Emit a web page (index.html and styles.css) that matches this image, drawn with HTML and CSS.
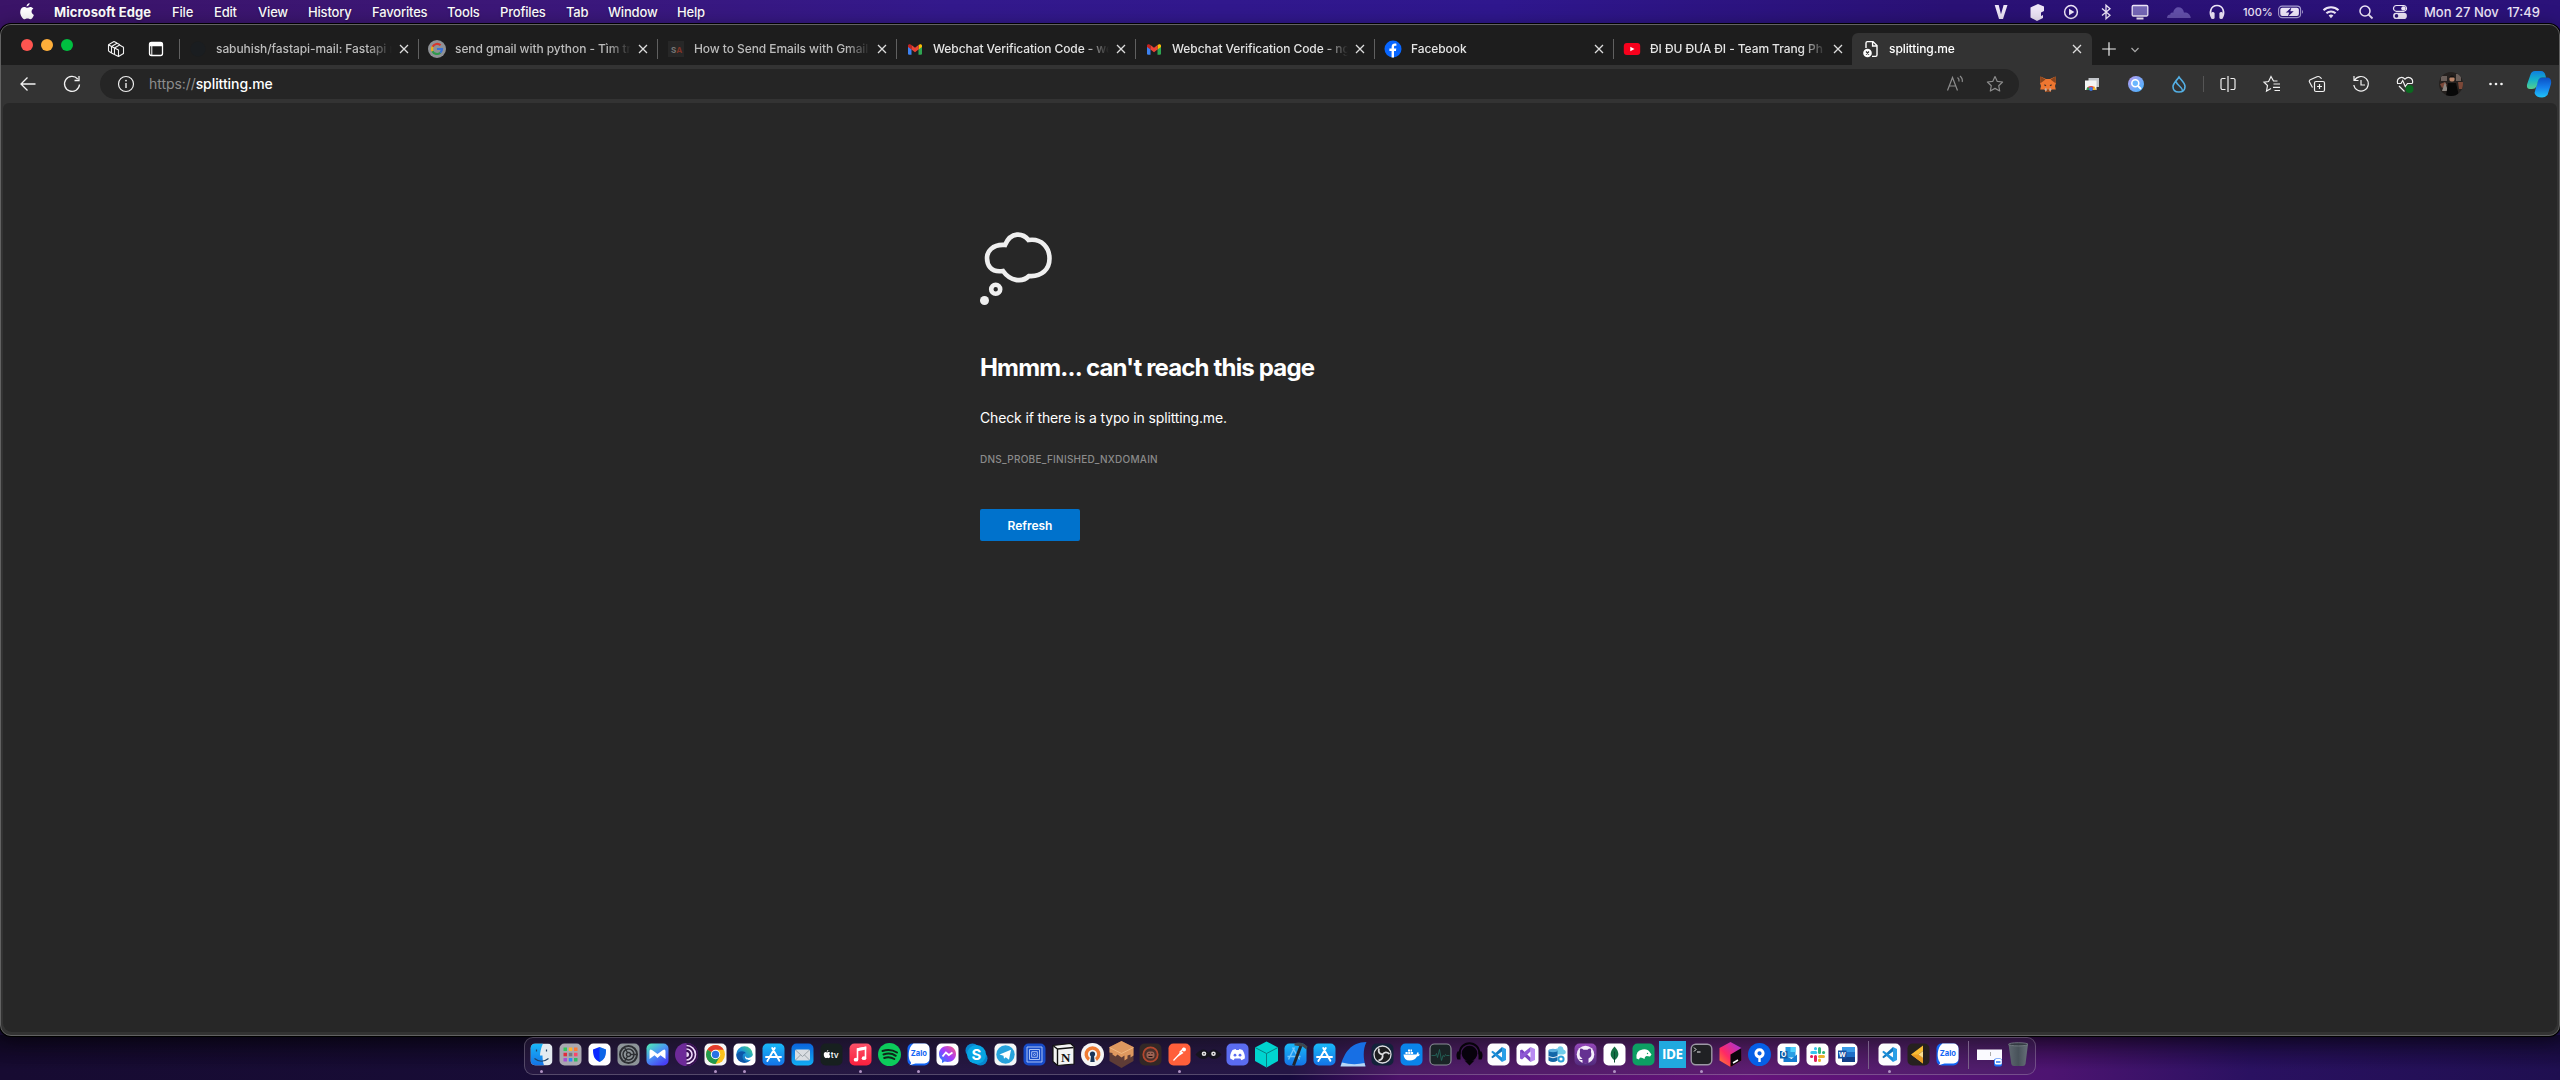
FILE: index.html
```html
<!DOCTYPE html>
<html lang="en">
<head>
<meta charset="utf-8">
<title>splitting.me</title>
<link rel="stylesheet" href="styles.css">
</head>
<body>
<svg class="defs" width="0" height="0" aria-hidden="true">
  <defs>
    <linearGradient id="g-sky" x1="0" y1="0" x2="0" y2="1"><stop offset="0" stop-color="#19b8f8"/><stop offset="1" stop-color="#1473e6"/></linearGradient>
    <linearGradient id="g-deep" x1="0" y1="0" x2="0" y2="1"><stop offset="0" stop-color="#0a63dc"/><stop offset="1" stop-color="#12aef4"/></linearGradient>
    <linearGradient id="g-edge" x1="0" y1="1" x2="1" y2="0"><stop offset="0" stop-color="#0c4fa0"/><stop offset=".5" stop-color="#1b93d8"/><stop offset="1" stop-color="#46d47c"/></linearGradient>
    <linearGradient id="g-red" x1="0" y1="0" x2="0" y2="1"><stop offset="0" stop-color="#fb5268"/><stop offset="1" stop-color="#fa1f3d"/></linearGradient>
    <linearGradient id="g-purple" x1="0" y1="0" x2="0" y2="1"><stop offset="0" stop-color="#9447b8"/><stop offset="1" stop-color="#512b7c"/></linearGradient>
    <linearGradient id="g-teal" x1="0" y1="0" x2=".7" y2="1"><stop offset="0" stop-color="#4ff0b0"/><stop offset=".5" stop-color="#4a96f2"/><stop offset="1" stop-color="#473ff5"/></linearGradient>
    <linearGradient id="g-msg" x1="0" y1="1" x2="1" y2="0"><stop offset="0" stop-color="#0a8cff"/><stop offset=".5" stop-color="#a13aff"/><stop offset="1" stop-color="#ff5c7a"/></linearGradient>
    <linearGradient id="g-jet" x1="0" y1="1" x2="1" y2="0"><stop offset="0" stop-color="#ff8a28"/><stop offset=".4" stop-color="#ff2965"/><stop offset="1" stop-color="#9a35e8"/></linearGradient>
    <linearGradient id="g-cop1" x1="0" y1="0" x2="0" y2="1"><stop offset="0" stop-color="#0e7fe0"/><stop offset=".5" stop-color="#16b3c8"/><stop offset="1" stop-color="#56d08c"/></linearGradient>
    <linearGradient id="g-cop2" x1="0" y1="0" x2="0" y2="1"><stop offset="0" stop-color="#0b4fc4"/><stop offset=".5" stop-color="#1580ec"/><stop offset="1" stop-color="#20c4f8"/></linearGradient>
    <linearGradient id="g-lens" x1="0" y1="0" x2="1" y2="1"><stop offset="0" stop-color="#b99bf0"/><stop offset="1" stop-color="#3fb4ff"/></linearGradient>
    <linearGradient id="g-trash" x1="0" y1="0" x2="1" y2="0"><stop offset="0" stop-color="#5e6870"/><stop offset=".5" stop-color="#48525a"/><stop offset="1" stop-color="#68727a"/></linearGradient>
    <clipPath id="c-tile"><rect x="-11" y="-11" width="22" height="22" rx="5"/></clipPath>
    <clipPath id="c-face"><circle r="12"/></clipPath>
    <symbol id="close" viewBox="0 0 10 10"><path d="M1 1l8 8M9 1L1 9" fill="none" stroke="currentColor" stroke-width="1.3"/></symbol>
    <symbol id="apple" viewBox="0 0 14 17"><path d="M9.6 0c.1 1.800-1.300 3.400-3 3.400C6.400 1.800 8 .2 9.600 0zM7.200 4.800c.7 0 1.700-.9 3.100-.9 1.100 0 2.300.6 3.100 1.700-2.700 1.600-2.300 5.200.5 6.300-.7 1.900-2.100 4.400-3.600 4.400-1.100 0-1.500-.7-2.800-.7s-1.800.7-2.800.7C2.900 16.300.2 12.600.2 9.200c0-3.300 2-5.200 4.100-5.200 1.300 0 2.200.8 2.900.8z" fill="#fff"/></symbol>
    <symbol id="gmail" viewBox="0 0 16 12"><path d="M0 2v8.500C0 11.300.7 12 1.500 12H4V5z" fill="#3d82f0"/><path d="M16 2v8.500c0 .8-.7 1.500-1.500 1.500H12V5z" fill="#2fa551"/><path d="M12 0.800V6l4-3V1.600C16 .2 14.400-.5 13.200.3z" fill="#fbbc05"/><path d="M4 .9V6L0 3V1.600C0 .2 1.600-.5 2.800.3z" fill="#c5221f"/><path d="M4 .9l4 3 4-3V6L8 9 4 6z" fill="#ea4335"/></symbol>
    <symbol id="google" viewBox="0 0 18 18"><circle cx="9" cy="9" r="9" fill="#8f9296"/><g fill="none" stroke-width="2.200"><path d="M12.600 5.300A5 5 0 0 0 4.600 6.800" stroke="#d6382d"/><path d="M4.500 6.800a5 5 0 0 0 0 4.400" stroke="#e9b21a"/><path d="M4.500 11.200a5 5 0 0 0 7.800 1.500" stroke="#2f9a4c"/><path d="M9 9h5a5 5 0 0 1-1.700 3.700" stroke="#3a72d8"/></g></symbol>
    <symbol id="vscode" viewBox="-8 -8 16 16"><path d="M-7.300 2.400L3.500-7.500V-3L-5.900 3.700z" fill="#1278be"/><path d="M-7.300-2.400L3.500 7.500V3L-5.900-3.700z" fill="#1b90dc"/><path d="M3.500-7.600L7.500-5.600V5.600L3.500 7.600z" fill="#2a9fe6"/></symbol>
    <symbol id="vs-tile" viewBox="-14.500 -14.500 29 29"><rect x="-11" y="-11" width="22" height="22" rx="5" fill="#fcfcfd"/><use href="#vscode" x="-8" y="-8" width="16" height="16"/></symbol>
    <symbol id="zalo" viewBox="-14.500 -14.500 29 29"><rect x="-11" y="-11" width="22" height="22" rx="5" fill="#1264f4"/><path d="M-5-11H6a5 5 0 0 1 5 5V4a5 5 0 0 1-5 5h-9l-6 1.800c1.300-1 2-2 1.200-3.200C-10.800 4-10.800-7-5-11z" fill="#fff"/><text x=".3" y="1.500" font-size="7.600" font-weight="700" fill="#1264f4" text-anchor="middle">Zalo</text></symbol>
    <symbol id="store" viewBox="-14.500 -14.500 29 29"><rect x="-11" y="-11" width="22" height="22" rx="5" fill="url(#g-sky)"/><path d="M1.300-6.500L-4.700 4M-1.300-6.500L4.900 4.500l1 1.700M-7.500 2.500H2.500M5 2.500h2.500M-5.500 5.200l-.7 1.200" fill="none" stroke="#fff" stroke-width="1.900" stroke-linecap="round"/></symbol>
  </defs>
</svg>

<header class="menubar">
  <svg class="apple" viewBox="0 0 14 17"><use href="#apple"/></svg>
  <nav class="menus">
    <span class="app">Microsoft Edge</span><span>File</span><span>Edit</span><span>View</span><span>History</span><span>Favorites</span><span>Tools</span><span>Profiles</span><span>Tab</span><span>Window</span><span>Help</span>
  </nav>
  <div class="status">
    <svg viewBox="-12 -12 24 24"><path d="M-6.300-7h4L0 2.200 2.600-7h3.900L2 7h-4z" fill="#eee6f8"/></svg>
    <svg viewBox="-12 -12 24 24"><path d="M-6.500-4.500L1-8l6 2.500V-1L4 .5V4L6 3v3L0 9-6.500 5.500z" fill="#eee6f8"/></svg>
    <svg viewBox="-12 -12 24 24"><circle r="6.400" fill="none" stroke="#eee6f8" stroke-width="1.500"/><path d="M-2-3.200L3.400 0-2 3.200z" fill="#eee6f8"/></svg>
    <svg viewBox="-12 -12 24 24"><path d="M-4-3.500L4 3.300 0 6.800V-6.800L4-3.300-4 3.500" fill="none" stroke="#eee6f8" stroke-width="1.300"/></svg>
    <svg viewBox="-12 -12 24 24"><rect x="-7.800" y="-6.500" width="15.600" height="10.500" rx="1.200" fill="#7566b6" stroke="#eee6f8" stroke-width="1.300"/><path d="M-3.500 6.500h7" stroke="#eee6f8" stroke-width="2"/></svg>
    <svg viewBox="-12 -12 24 24"><path d="M-12 6c0-2.500 1.500-3.600 3.300-3.600 0-1.700 2-2.400 2.900-1.500C-5-6.800 4-6.500 5 .5c3-.5 6.500 1.500 6.800 5.500z" fill="#6350aa"/></svg>
    <svg viewBox="-12 -12 24 24"><path d="M-5.200 5.500C-8 1-6.500-6.500 0-6.500S8 1 5.200 5.500" fill="none" stroke="#eee6f8" stroke-width="1.600"/><rect x="-6" y="0" width="3.600" height="7" rx="1.600" fill="#eee6f8"/><rect x="2.400" y="0" width="3.600" height="7" rx="1.600" fill="#eee6f8"/></svg>
    <span class="pct">100%</span>
    <svg class="battery" viewBox="0 0 26 14"><rect x=".6" y="1.100" width="22" height="11.500" rx="3.500" fill="none" stroke="#a79cd0" stroke-width="1.100"/><rect x="2.300" y="2.800" width="18.600" height="8.100" rx="2" fill="#eee6f8"/><path d="M24 5c1.300.5 1.300 3.300 0 3.800z" fill="#a79cd0"/><path d="M13.500 2.200L7.800 7.600h3.400L9.800 11.800l5.900-5.500h-3.400z" fill="#2b1278"/></svg>
    <svg viewBox="-12 -12 24 24"><g fill="none" stroke="#eee6f8" stroke-width="2.100"><path d="M-7.500-1.700a10.800 10.800 0 0 1 15 0M-4.600 1.300a6.600 6.600 0 0 1 9.200 0"/></g><path d="M0 6.200L-2.400 3.600a3.500 3.500 0 0 1 4.800 0z" fill="#eee6f8"/></svg>
    <svg viewBox="-12 -12 24 24"><circle cx="-1" cy="-1" r="5" fill="none" stroke="#eee6f8" stroke-width="1.500"/><path d="M2.600 2.600L6.500 6.500" stroke="#eee6f8" stroke-width="1.800"/></svg>
    <svg viewBox="-12 -12 24 24"><rect x="-6.500" y="-6.500" width="13" height="5.800" rx="2.900" fill="none" stroke="#eee6f8" stroke-width="1.200"/><circle cx="3.400" cy="-3.600" r="2.200" fill="#eee6f8"/><rect x="-6.900" y=".8" width="13.800" height="6.200" rx="3.100" fill="#eee6f8"/><circle cx="-3.500" cy="3.900" r="1.800" fill="#2b1278"/></svg>
    <span class="clock"><span>Mon 27 Nov</span><span>17:49</span></span>
  </div>
</header>

<main class="window">
  <div class="tabstrip">
    <div class="lights"><i class="red"></i><i class="amber"></i><i class="green"></i></div>
    <div class="strip-tools">
      <svg viewBox="-10 -10 20 20"><g fill="none" stroke="#f0f0f0" stroke-width="1.100" stroke-linejoin="round"><path d="M-1.500-1L3.500-4 7.500-1.800V4.500L2.500 7.500-1.500 5.500zM-1.500-1L2.500 1V7.500"/><path d="M-4.500 4V-2.500L1-5.800 4-4.300M-7.500 2V-4.300L-2-7.500 1-6M-4.500-2.500L-1.500-1M-7.500-4.300L-4.500-2.500M-4.500 4l3 1.500M-7.500 2l3 2"/></g></svg>
      <svg viewBox="-10 -10 20 20"><rect x="-6.500" y="-6.500" width="13" height="13" rx="2" fill="none" stroke="#fff" stroke-width="1.300"/><path d="M-6.500-6.300h13v3.500h-13z" fill="#fff"/><path d="M-4.200-3V6" stroke="#fff" stroke-width="1"/></svg>
    </div>
    <div class="tabs">
      <div class="tab dim"><svg class="fav" viewBox="0 0 18 18"><circle cx="9" cy="9" r="7.500" fill="#1a1d20"/></svg><span class="title">sabuhish/fastapi-mail: Fastapi m</span><svg class="x"><use href="#close"/></svg></div>
      <div class="tab dim"><svg class="fav"><use href="#google"/></svg><span class="title">send gmail with python - Tìm tr</span><svg class="x"><use href="#close"/></svg></div>
      <div class="tab dim"><svg class="fav" viewBox="0 0 18 18"><rect x="1" y="1" width="16" height="16" fill="#272727"/><text x="4" y="12.500" font-size="8" font-weight="700" fill="#777">S<tspan fill="#803426">A</tspan></text></svg><span class="title">How to Send Emails with Gmail</span><svg class="x"><use href="#close"/></svg></div>
      <div class="tab"><svg class="fav mail"><use href="#gmail"/></svg><span class="title">Webchat Verification Code - we</span><svg class="x"><use href="#close"/></svg></div>
      <div class="tab"><svg class="fav mail"><use href="#gmail"/></svg><span class="title">Webchat Verification Code - ng</span><svg class="x"><use href="#close"/></svg></div>
      <div class="tab"><svg class="fav" viewBox="0 0 18 18"><circle cx="9" cy="9" r="8.500" fill="#0866ff"/><path d="M7.600 17.500V11H5.400V8.600h2.200V7.200c0-2.600 1.300-3.700 3.300-3.700.7 0 1.200.1 1.500.2v2.100h-1.100c-1 0-1.300.5-1.300 1.400v1.400h2.300L11.900 11H10v6.500z" fill="#fff"/></svg><span class="title">Facebook</span><svg class="x"><use href="#close"/></svg></div>
      <div class="tab"><svg class="fav" viewBox="0 0 18 18"><rect x=".8" y="3" width="16.400" height="12" rx="3" fill="#f8001c"/><path d="M7.300 6.700L11.500 9l-4.200 2.300z" fill="#fff"/></svg><span class="title">ĐI ĐU ĐƯA ĐI - Team Trang Ph</span><svg class="x"><use href="#close"/></svg></div>
      <div class="tab active"><svg class="fav" viewBox="0 0 18 18"><path d="M4 8V3c0-.8.600-1.400 1.400-1.400H11l4 4V15c0 .8-.6 1.400-1.400 1.400H10M10.600 1.600V6H15" fill="none" stroke="#fff" stroke-width="1.400"/><circle cx="5.500" cy="13" r="4.300" fill="#fff"/><path d="M4 11.500l3 3m0-3l-3 3" stroke="#333" stroke-width="1.200"/></svg><span class="title">splitting.me</span><svg class="x"><use href="#close"/></svg></div>
    </div>
    <svg class="plus" viewBox="0 0 14 14"><path d="M7 .2v13.600M.2 7h13.600" stroke="#f0f0f0" stroke-width="1.200"/></svg>
    <svg class="chev" viewBox="0 0 8 6"><path d="M.5 1L4 4.700 7.500 1" fill="none" stroke="#aaa" stroke-width="1.200"/></svg>
  </div>

  <div class="toolbar">
    <svg class="nav" viewBox="-10 -10 20 20"><path d="M7.500 0H-7M-.5-6.500L-7 0-.5 6.500" fill="none" stroke="#f2f2f2" stroke-width="1.300"/></svg>
    <svg class="nav reload" viewBox="-10 -10 20 20"><path d="M7.500.5A7.500 7.500 0 1 1 5.700-5M7-8v4.500H2.500" fill="none" stroke="#f2f2f2" stroke-width="1.300"/></svg>
    <div class="address">
      <svg class="info" viewBox="-9 -9 18 18"><circle r="7.500" fill="none" stroke="#eee" stroke-width="1.200"/><path d="M0-1V4" stroke="#eee" stroke-width="1.400"/><circle cy="-3.400" r=".9" fill="#eee"/></svg>
      <span class="url"><span class="scheme">https://</span>splitting.me</span>
      <svg class="read" viewBox="-10 -10 20 20"><path d="M-7.500 6.500L-2.500-6.500 2.500 6.500M-5.800 2h6.600M2.500-6.500q2 1.500 1.500 4M5-8q3 2.500 2.200 6" fill="none" stroke="#8c8c8c" stroke-width="1.200"/></svg>
      <svg class="star" viewBox="-10 -10 20 20"><path d="M0-7.500L2.300-2.600 7.600-2 3.700 1.700 4.700 7 0 4.400-4.700 7-3.700 1.700-7.600-2-2.300-2.600z" fill="none" stroke="#8c8c8c" stroke-width="1.200" stroke-linejoin="round"/></svg>
    </div>
    <div class="extensions">
      <svg viewBox="-12 -12 24 24"><path d="M-7.500-7.500L-2-5h4l5.500-2.500L8-1 7 2l.8 3.500L3.500 5.500 2.500 8h-5l-1-2.500-4.300 0L-7 2-8-1z" fill="#ee7630"/><path d="M-7.500-7.500L-2.500-4.500-6.500-1.500-8-1zM7.500-7.500L2.500-4.500 6.500-1.500 8-1zM-2 5.500h4V8h-4z" fill="#8a451d"/><path d="M-4 .5l2.500.5-1.500 1.300zM4 .5l-2.500.5 1.500 1.300z" fill="#222"/><path d="M-3.500 5.500L-2 3.500-1 6l-1 1.500zM3.500 5.500L2 3.500 1 6l1 1.500z" fill="#c5ada0"/></svg>
      <svg viewBox="-12 -12 24 24"><path d="M-3.500-6H7V3H-3.500z" fill="#c3c6ca"/><path d="M-7-3.500H4.500V6H-7z" fill="#f4f4f4"/><path d="M-5.500 6A4.600 4.600 0 0 1 3.600 6z" fill="#df4336"/><path d="M-5.500 6a4 4 0 0 1 1.500-3.300L-2 6z" fill="#2a9c50"/><path d="M.7 6L2 2.100Q3.500 3.500 3.600 6z" fill="#f3bd27"/><circle cx="-1" cy="5" r="1.900" fill="#3b78e7"/></svg>
      <svg viewBox="-12 -12 24 24"><circle r="8" fill="url(#g-lens)"/><circle cx="-.7" cy="-.8" r="3.500" fill="#6ab7ff" stroke="#fff" stroke-width="1.600"/><path d="M2 2l3 3" stroke="#fff" stroke-width="1.800"/></svg>
      <svg viewBox="-12 -12 24 24"><path d="M0-7C2-4 6-1 6 2.500S3.400 8-.2 8-6 5.700-6 2.500C-6-.5-2-4 0-7zM-3-2.500C-2 1.800 3 2 3.500 6.800" fill="none" stroke="#53afe4" stroke-width="1.600"/></svg>
    </div>
    <i class="bar-sep"></i>
    <div class="actions">
      <svg viewBox="-12 -12 24 24"><path d="M-2.500-5.500h-3A1.500 1.500 0 0 0-7-4v8a1.500 1.500 0 0 0 1.500 1.500h3M2.500-5.500h3A1.500 1.500 0 0 1 7-4v8a1.500 1.500 0 0 1-1.500 1.500h-3M0-8V8"/></svg>
      <svg viewBox="-12 -12 24 24"><path d="M5.500-3L1.500-3-1-7.500-3.400-2.500-8-1.800-4.500 1.500-5.500 7-1 4.500M1.500 0H8M1 3.300h7M2.500 6.500H8"/></svg>
      <svg viewBox="-12 -12 24 24"><rect x="-2.500" y="-2.500" width="10" height="10" rx="1.500"/><path d="M2.500 0v5M0 2.500h5M-4.500 3.500L-7.500-2c-.5-1 0-1.800.8-2.200L0-7.300c1-.4 3.500-.3 4.500 2.200"/></svg>
      <svg viewBox="-12 -12 24 24"><path d="M-6.500-3.500A7.300 7.300 0 1 1-7.200 1M-7-8v4.500h4.500M0-4V1h4"/></svg>
      <svg viewBox="-12 -12 24 24"><path d="M-7.500-1C-8.500-6-3-8.500 0-4.800 3-8.500 8.500-6 7.500-1M-8-.5h4L-2.300-3.500.3 2.500 2.500-.5h5.200M-6 2L-.5 7.500"/><circle cx="4.500" cy="5" r="4" fill="#0b6a20" stroke="none"/></svg>
      <svg viewBox="-12 -12 24 24"><g clip-path="url(#c-face)" stroke="none"><path d="M-12-12h24v24h-24z" fill="#25211f"/><path d="M-10-8h6v5h-6zM5-10h5v7H5z" fill="#6b5f5a"/><path d="M-11 0l5-2 2 3-5 3zM7-2h5v7H8z" fill="#7c4838"/><path d="M-6-2L-3 7h-6z" fill="#8d8782"/><circle cx="1" cy="-5" r="2.600" fill="#b98468"/><path d="M-2-6.500q3-4 6 0z" fill="#111"/><path d="M-3-1h8l3 13H-5z" fill="#080808"/></g></svg>
      <svg viewBox="-12 -12 24 24"><g fill="#f4f4f4" stroke="none"><circle cx="-5.500" r="1.300"/><circle r="1.300"/><circle cx="5.500" r="1.300"/></g></svg>
      <svg viewBox="-12 -12 24 24"><g stroke="none"><path d="M8.500 11Q6 13.500 3 13.500-3 13.500-4.500 9L-1-4Q0-7 3-6.500H8Q13-6.500 12 0z" fill="url(#g-cop2)"/><path d="M-8.500-9.500Q-7.500-13-4-13H2Q5.500-13 6.500-8.500L7-6.500H3Q0-6.500-1-3L-2.500 2.500Q-4 5-7 5H-9Q-13 5-11.800 0z" fill="url(#g-cop1)"/></g></svg>
    </div>
  </div>

  <section class="page">
    <div class="error">
      <svg class="cloud" viewBox="0 0 72 73"><path d="M25 13C31-1 43 1 48.500 8C62 6 69.500 16 69.500 26.500S62 45 49 44C42 51 30 49 23 39C10 41 7 32 7 26S12 12 25 13Z" fill="none" stroke="#efefef" stroke-width="4.600"/><circle cx="15.700" cy="57.300" r="4.500" fill="none" stroke="#efefef" stroke-width="4.600"/><circle cx="4.500" cy="68.500" r="4.500" fill="#efefef"/></svg>
      <h1>Hmmm... can't reach this page</h1>
      <p class="hint">Check if there is a typo in splitting.me.</p>
      <p class="code">DNS_PROBE_FINISHED_NXDOMAIN</p>
      <button type="button">Refresh</button>
    </div>
  </section>
</main>

<footer class="dock">
  <span class="on"><svg viewBox="-14.500 -14.500 29 29"><g clip-path="url(#c-tile)"><path d="M-11-11h22v22h-22z" fill="#e4ebf0"/><path d="M-11-11H1.500C-.5-7-1.500-2-1.500 1H1c0 3 .3 6 1.500 10H-11z" fill="url(#g-sky)"/></g><path d="M-5-5v2M5-5v2M-7 4Q0 9.500 7 4" fill="none" stroke="#214366" stroke-width="1.200"/></svg></span>
  <span><svg viewBox="-14.500 -14.500 29 29"><rect x="-11" y="-11" width="22" height="22" rx="5" fill="#aaa8b0"/><path d="M-7-7h3.500v3.500H-7z" fill="#33c65a"/><path d="M-1.700-7h3.500v3.500h-3.500z" fill="#ffb32c"/><path d="M3.500-7H7v3.500H3.500z" fill="#ff7a35"/><path d="M-7-1.700h3.500v3.500H-7z" fill="#e02c3c"/><path d="M-1.700-1.700h3.500v3.500h-3.500z" fill="#77777e"/><path d="M3.500-1.700H7v3.500H3.500z" fill="#fb456c"/><path d="M-7 3.500h3.500V7H-7z" fill="#a94fd2"/><path d="M-1.700 3.500h3.500V7h-3.500z" fill="#298bf4"/><path d="M3.500 3.500H7V7H3.500z" fill="#30bb63"/></svg></span>
  <span><svg viewBox="-14.500 -14.500 29 29"><rect x="-11" y="-11" width="22" height="22" rx="5" fill="#fff"/><path d="M0-7.500L6.500-5C6.500 2 5 5 0 7.500-5 5-6.500 2-6.500-5z" fill="#0a28ff"/><path d="M0-7.500L6.500-5C6.500 2 5 5 0 7.500z" fill="#12c4c4" opacity=".4"/></svg></span>
  <span><svg viewBox="-14.500 -14.500 29 29"><rect x="-11" y="-11" width="22" height="22" rx="5" fill="#8d9498"/><g fill="none" stroke="#2d2f33"><circle r="8.500" stroke-width="2"/><circle r="5.500" stroke-width="1.500"/><circle r="2" stroke-width="1.300"/><path d="M2 0h6M-1-2L-4-7M-1 2l-3 5" stroke-width="1.300"/></g></svg></span>
  <span><svg viewBox="-14.500 -14.500 29 29"><rect x="-11" y="-11" width="22" height="22" rx="5" fill="url(#g-teal)"/><path d="M-8 4.500V-3Q-8-6-5.500-4.500L0-.5l5.500-4Q8-6 8-3v7.500L3 .8 0 3.500-3 .8z" fill="#fff"/></svg></span>
  <span><svg viewBox="-14.500 -14.500 29 29"><circle r="11.500" fill="#6d2a98"/><path d="M0-11.500a11.500 11.500 0 0 1 0 23z" fill="#36104f"/><g fill="none" stroke="#efd9fa" stroke-width="1.600"><path d="M0-9a9 9 0 0 1 0 18M0-5.500a5.500 5.500 0 0 1 0 11"/></g><path d="M0-2.500a2.500 2.500 0 0 1 0 5z" fill="#efd9fa"/></svg></span>
  <span class="on"><svg viewBox="-14.500 -14.500 29 29"><rect x="-11" y="-11" width="22" height="22" rx="5" fill="#f6f6f6"/><circle r="9.500" fill="#fbc21c"/><path d="M0 0L-8.200-4.750A9.500 9.500 0 0 1 8.200-4.750H0z" fill="#e33b2e"/><path d="M-8.200-4.750A9.500 9.500 0 0 0 0 9.500L4.100 2.400 0 0z" fill="#229a4c"/><circle r="4.700" fill="#fff"/><circle r="3.700" fill="#2a72e5"/></svg></span>
  <span class="on"><svg viewBox="-14.500 -14.500 29 29"><rect x="-11" y="-11" width="22" height="22" rx="5" fill="#fff"/><circle r="8.300" fill="url(#g-edge)"/><path d="M-8 1C-7-4 0-4.500 1.500-1 .5-1.500-2-1-2 2.500-2 6 2 8 5 6.600 1 9.500-7 9-8 1z" fill="#0d57a8"/><path d="M.8 1.500C1.500 4.500 6 3.800 9 .8L8.200 4.500C4 6.500-.5 5 .8 1.500z" fill="#fff"/></svg></span>
  <span><svg><use href="#store"/></svg></span>
  <span><svg viewBox="-14.500 -14.500 29 29"><rect x="-11" y="-11" width="22" height="22" rx="5" fill="url(#g-deep)"/><rect x="-7.500" y="-5" width="15" height="11" rx="1.500" fill="#d9dde1"/><path d="M-7-4.500L0 2l7-6.500M-7 5.500L-2 .5M7 5.500L2 .5" fill="none" stroke="#8c959c" stroke-width=".8"/></svg></span>
  <span><svg viewBox="-14.500 -14.500 29 29"><rect x="-11" y="-11" width="22" height="22" rx="5" fill="#17201f"/><use href="#apple" x="-8" y="-4.500" width="7" height="8.500"/><text x="-.8" y="3.500" font-size="8.500" font-weight="500" fill="#fff">tv</text></svg></span>
  <span class="on"><svg viewBox="-14.500 -14.500 29 29"><rect x="-11" y="-11" width="22" height="22" rx="5" fill="url(#g-red)"/><path d="M-3 5V-5.500L5-7V3.500" fill="none" stroke="#fff" stroke-width="1.600"/><path d="M-3-6.200L5.700-8v3L-3-3.200z" fill="#fff"/><ellipse cx="-4.500" cy="5.200" rx="2.300" ry="1.900" fill="#fff"/><ellipse cx="3.500" cy="3.700" rx="2.300" ry="1.900" fill="#fff"/></svg></span>
  <span><svg viewBox="-14.500 -14.500 29 29"><circle r="11.500" fill="#0ccb5b"/><path d="M-7-3.500Q1-6 7.500-2M-6 0Q1-2.300 6.300 1.300M-5.300 3.500Q0 1.700 4.800 4.500" fill="none" stroke="#10251a" stroke-width="2" stroke-linecap="round"/></svg></span>
  <span class="on"><svg><use href="#zalo"/></svg></span>
  <span><svg viewBox="-14.500 -14.500 29 29"><rect x="-11" y="-11" width="22" height="22" rx="5" fill="#fff"/><path d="M0-8.500c5 0 8.500 3.500 8.500 8S5 7.500 0 7.500c-1 0-2-.1-2.800-.4L-5.500 8.500V5.500C-7.500 4-8.500 2-8.500-.5c0-4.500 3.500-8 8.500-8z" fill="url(#g-msg)"/><path d="M-5 2L-1.600-2 1.300.5 5-2" fill="none" stroke="#fff" stroke-width="1.800"/></svg></span>
  <span><svg viewBox="-14.500 -14.500 29 29"><circle cx="-4" cy="-4" r="7" fill="#0786cf"/><circle cx="4" cy="4" r="7" fill="#0786cf"/><circle r="9.500" fill="#07a5e4"/><text y="5.500" font-size="15" font-weight="700" fill="#fff" text-anchor="middle">S</text></svg></span>
  <span><svg viewBox="-14.500 -14.500 29 29"><rect x="-11" y="-11" width="22" height="22" rx="5" fill="#f4f6f7"/><circle r="9.200" fill="#27a2dc"/><path d="M-6 0L5.500-4.700 3.500 5.200.2 2.700-1.500 4.300-2 1.300z" fill="#fff"/></svg></span>
  <span><svg viewBox="-14.500 -14.500 29 29"><rect x="-11" y="-11" width="22" height="22" rx="5" fill="#174bc8"/><g fill="none" stroke="#a8c0f4" stroke-width="1"><path d="M-7.500-7.500h15v15h-15zM-5-5H5V5H-5zM-2.800-2.800h5.600v5.600h-5.600z"/><circle r="1"/></g></svg></span>
  <span><svg viewBox="-14.500 -14.500 29 29"><path d="M-10.500-9L7-11l3.500 3V9.500L-6 11l-4.500-4z" fill="#f4f4f4" stroke="#111" stroke-width="1.200"/><path d="M-10-8.500L-6-5.500 10-7M-6-5.500V10.500" stroke="#111" fill="none" stroke-width="1.400"/><text x="2.200" y="7" font-size="13" font-weight="700" font-family="Liberation Serif, serif" fill="#111" text-anchor="middle">N</text></svg></span>
  <span><svg viewBox="-14.500 -14.500 29 29"><circle r="11.500" fill="#f5f5f5"/><path d="M-3.500 5A6.300 6.300 0 1 1 3.500 5" fill="none" stroke="#ef7b32" stroke-width="3.400"/><circle cy="-.5" r="2.600" fill="#1c3557"/><path d="M-1.500 1h3l.7 6.500h-4.400z" fill="#1c3557"/></svg></span>
  <span><svg viewBox="-14.500 -14.500 29 29"><path d="M0-13.500L12-7.500V6.500L0 13.500-12 6.500V-7.500z" fill="#5e3c36"/><path d="M0-13.500L12-7.500V1L9 3V0L6 1v3L3 6V1L0 3l-4-3-2 2-3-2v-1.500L-12-2v-5.500z" fill="#de985f"/><path d="M-12-7L0-1 12-7" fill="none" stroke="#f2bd88" stroke-width=".8"/></svg></span>
  <span><svg viewBox="-14.500 -14.500 29 29"><rect x="-11" y="-11" width="22" height="22" rx="5" fill="#322826"/><circle r="7.200" fill="#49302b" stroke="#b4472e" stroke-width="1.800"/><rect x="-4" y="-3" width="8" height="7" rx="3" fill="#9b6253"/><path d="M-2-1h1M1-1h1M-2 2h4" stroke="#22100c"/></svg></span>
  <span class="on"><svg viewBox="-14.500 -14.500 29 29"><rect x="-11" y="-11" width="22" height="22" rx="5" fill="#ff5f3a"/><path d="M-6 6L1-1.500M0-2L4.500-6.500" stroke="#fff" stroke-width="1.200"/><path d="M-3 3L2-3.500l2 2z" fill="#fff"/><circle cx="4.500" cy="-5" r="2" fill="#fff"/></svg></span>
  <span><svg viewBox="-14.500 -14.500 29 29"><path d="M-13 0Q-5-9 0-2 5-9 13 0 6 8 0 2-6 8-13 0z" fill="#15141e"/><circle cx="-4.500" cy="-.8" r="2.300" fill="#e8e8e8"/><circle cx="5" cy="-.8" r="2.300" fill="#e8e8e8"/><circle cx="-4.500" cy="-.8" r=".8" fill="#222"/><circle cx="5" cy="-.8" r=".8" fill="#222"/></svg></span>
  <span><svg viewBox="-14.500 -14.500 29 29"><rect x="-11" y="-11" width="22" height="22" rx="5" fill="#5b6cf0"/><path d="M-5-4.500L-2-5.500l.8 1h2.400l.8-1 3 1C7-1.500 7.700 1.500 7.300 4L4 5.700 2.800 4h-5.600L-4 5.700-7.300 4C-7.700 1.500-7-1.500-5-4.500z" fill="#fff"/><circle cx="-2.500" cy=".7" r="1.400" fill="#5b6cf0"/><circle cx="2.500" cy=".7" r="1.400" fill="#5b6cf0"/></svg></span>
  <span><svg viewBox="-14.500 -14.500 29 29"><path d="M0-13L11.500-7V6.500L0 13-11.500 6.500V-7z" fill="#00d4d0"/><path d="M-11.500-7L0-1 11.500-7M0-1V13" fill="none" stroke="#087f84" stroke-width="1"/></svg></span>
  <span><svg viewBox="-14.500 -14.500 29 29"><rect x="-11" y="-11" width="22" height="22" rx="5" fill="url(#g-sky)"/><path d="M-1-7L-7 5M-3-7l7 12M-8 2H5" stroke="#76c7fa" stroke-width="1.400"/><path d="M5.500-9L-2 11" stroke="#20252b" stroke-width="3"/><path d="M-1-11Q5-14 12-8L11-5 7-8-1-9z" fill="#40464e"/></svg></span>
  <span><svg><use href="#store"/></svg></span>
  <span><svg viewBox="-14.500 -14.500 29 29"><path d="M-13 11.500C-9-2-3-12 13-12.500 9-5 10 5 12 11.500z" fill="#176fe4"/><path d="M-13 12l1.500-4Q0 11 11 8.500l1 3.500z" fill="#b7d7f6"/></svg></span>
  <span><svg viewBox="-14.500 -14.500 29 29"><rect x="-11" y="-11" width="22" height="22" rx="5" fill="#13223a"/><circle r="8.500" fill="#1d1d20" stroke="#dcdce0" stroke-width="1.300"/><path d="M0 0Q-5-1-3.500-6M0 0q3-4 7-.500M0 0q1 5-4 6" fill="none" stroke="#dcdce0" stroke-width="1.800"/></svg></span>
  <span><svg viewBox="-14.500 -14.500 29 29"><rect x="-11" y="-11" width="22" height="22" rx="5" fill="#0a84ea"/><path d="M-8 0H5q.3-2 1.500-2.500Q7.500-1.500 7-.3q1 0 1.500.4Q7.500 2 5.500 2 3.500 6-2 6-7.500 6-8 0z" fill="#fff"/><path d="M-6-1.500h8M-3.500-4h4" stroke="#fff" stroke-width="2" stroke-dasharray="2.200 .5"/></svg></span>
  <span><svg viewBox="-14.500 -14.500 29 29"><rect x="-10.500" y="-10.500" width="21" height="21" rx="4.500" fill="#1a2426" stroke="#8a8e96" stroke-width="1.200"/><path d="M-9 1h4l1-2 1 4L-1-5 1 6l1.500-5L4 2l1-2 1 1h3" fill="none" stroke="#246b5e" stroke-width=".8"/></svg></span>
  <span><svg viewBox="-14.500 -14.500 29 29"><path d="M-10 0C-10-15 10-15 10 0" fill="none" stroke="#060309" stroke-width="2"/><path d="M-12-3h3v8h-3q-2-4 0-8zM12-3H9v8h3q2-4 0-8z" fill="#060309"/><circle r="7.800" cy="-1" fill="#07020c"/><path d="M-5 6h10L0 11z" fill="#060309"/></svg></span>
  <span><svg><use href="#vs-tile"/></svg></span>
  <span><svg viewBox="-14.500 -14.500 29 29"><rect x="-11" y="-11" width="22" height="22" rx="5" fill="#fff"/><path d="M3-7.500L7.500-5.500v11L3 7.500z" fill="#b98af2"/><path d="M-7.500-4L-5.500-5 3 3V7.500L-7.500-2z" fill="#7942c0"/><path d="M-7.500-4V4l2 1L3-3v-4.500L-5-1z" fill="#8e58d4"/></svg></span>
  <span><svg viewBox="-14.500 -14.500 29 29"><rect x="-11" y="-11" width="22" height="22" rx="5" fill="#fff"/><path d="M-2-3q0-3 3-3 1-3 4-2 2 .5 2 3 3 1 2 4l-2 1H0z" fill="#6fcbea"/><path d="M-8-4h9V6q-4.500 3-9 0z" fill="#1267a8"/><ellipse cx="-3.500" cy="-4" rx="4.500" ry="1.700" fill="#5cb0df"/><path d="M-8 2q4.500 2.500 9 0" fill="none" stroke="#fff" stroke-width=".9"/><circle cx="4.500" cy="4.500" r="2.600" fill="#fff" stroke="#2b9ed8" stroke-width="2"/></svg></span>
  <span><svg viewBox="-14.500 -14.500 29 29"><rect x="-11" y="-11" width="22" height="22" rx="5" fill="url(#g-purple)"/><circle r="8.800" fill="#f5effa"/><path d="M-3 9V5.500Q-6 6-6.500 4q1.500 1 3.500 0Q-7 2-5.500-2.500-6-5-5-6q2 0 3 1.200h4Q3-6 5-6q1 1 .5 3.500Q7 2 3 4v5z" fill="#653192"/></svg></span>
  <span class="on"><svg viewBox="-14.500 -14.500 29 29"><rect x="-11" y="-11" width="22" height="22" rx="5" fill="#fff"/><path d="M0-8q7.500 8 .5 13.500h-1Q-7.500 0 0-8z" fill="#137044"/><path d="M0-3V8" stroke="#0a4a30" stroke-width="1"/></svg></span>
  <span><svg viewBox="-14.500 -14.500 29 29"><rect x="-11" y="-11" width="22" height="22" rx="5" fill="#0d9f63"/><path d="M-7 4Q-8-4-1-5 4-6 6.500-2L8 0 6.500 2 3 1.500Q1 2 1 4.500L-1 3.500Q-4 2-4.500 5z" fill="#fff"/><circle cx="4" cy="-1" r=".7" fill="#0d9f63"/></svg></span>
  <span><svg viewBox="-14.500 -14.500 29 29"><path d="M-13.500-13.500h27v27h-27z" fill="#20a9df"/><text y="4.200" font-size="13.500" font-weight="700" font-family="Open Sans, sans-serif" fill="#fff" text-anchor="middle" textLength="21">IDE</text></svg></span>
  <span class="on"><svg viewBox="-14.500 -14.500 29 29"><rect x="-10.300" y="-10.300" width="20.600" height="20.600" rx="4.500" fill="#202124" stroke="#9c98a4" stroke-width="1.400"/><path d="M-7.500-7L-5.500-5l-2 2M-4.500-2.500h3.500" fill="none" stroke="#eee" stroke-width="1"/></svg></span>
  <span><svg viewBox="-14.500 -14.500 29 29"><path d="M0-12.500L11-6.500V6L0 12.500-11 6V-6.500z" fill="url(#g-jet)"/><path d="M0 0L11-6.500V6L0 12.500z" fill="#0b050a"/><path d="M2.500 8.500l5-3" stroke="#fff" stroke-width="1.500"/></svg></span>
  <span><svg viewBox="-14.500 -14.500 29 29"><circle r="11.500" fill="#0660e6"/><circle cy="-1.200" r="3.600" fill="none" stroke="#fff" stroke-width="3"/><path d="M0 3v4.500" stroke="#fff" stroke-width="2.400"/></svg></span>
  <span><svg viewBox="-14.500 -14.500 29 29"><rect x="-11" y="-11" width="22" height="22" rx="5" fill="#fff"/><path d="M-3-7.500H7V3H-3z" fill="#289ee4"/><path d="M2-7.500h5v5H2z" fill="#50d2ff"/><path d="M-5 0L3 4.500 8.500 0v7.500H-5z" fill="#147bd0"/><path d="M-8.500-3.500h7.500V4h-7.500z" fill="#0f5ca8"/><text x="-4.700" y="2.800" font-size="7" font-weight="700" fill="#fff" text-anchor="middle">O</text></svg></span>
  <span><svg viewBox="-14.500 -14.500 29 29"><rect x="-11" y="-11" width="22" height="22" rx="5" fill="#fff"/><g stroke-width="3" stroke-linecap="round"><path d="M-2-6V-5.700M-5.700-1.900h4" stroke="#36c5f0"/><path d="M2-6v4M6-1.900h.2" stroke="#2eb67d"/><path d="M2 1.900h4M2 5.500V6" stroke="#ecb22e"/><path d="M-2 1.900V6M-6 1.900h.2" stroke="#e01e5a"/></g></svg></span>
  <span><svg viewBox="-14.500 -14.500 29 29"><rect x="-11" y="-11" width="22" height="22" rx="5" fill="#fff"/><path d="M-4.500-7.500h13v5h-13z" fill="#3a9ae6"/><path d="M-4.500-2.500h13v5h-13z" fill="#1f6fc6"/><path d="M-4.500 2.500h13v5h-13z" fill="#123f88"/><path d="M-8.500-4H0v8h-8.500z" fill="#164f9f"/><text x="-4.200" y="2.600" font-size="6.800" font-weight="700" fill="#fff" text-anchor="middle">W</text></svg></span>
  <i class="dock-sep"></i>
  <span class="on"><svg><use href="#vs-tile"/></svg></span>
  <span><svg viewBox="-14.500 -14.500 29 29"><rect x="-11" y="-11" width="22" height="22" rx="5" fill="#26211f"/><path d="M-7.500 0L4.500-9V-3.500L0 0l4.500 3.500V9z" fill="#f8bc34"/><path d="M-7.500 0L0 0l4.500 3.500V9z" fill="#e99c24"/><path d="M0 0L4.500-3.500v7z" fill="#ffe08c"/></svg></span>
  <span><svg><use href="#zalo"/></svg></span>
  <i class="dock-sep"></i>
  <span><svg viewBox="-14.500 -14.500 29 29"><path d="M-12.500-5H12.500V5.500h-25z" fill="#fafaff"/><path d="M1-2.500v4" stroke="#aaa"/><rect x="4.500" y="4" width="8" height="8" rx="2" fill="#1a6cf5"/><rect x="5.300" y="4.500" width="7" height="5.500" rx="1.500" fill="#fff"/><path d="M6.500 7.500h4.500" stroke="#1a6cf5" stroke-width="1.400"/></svg></span>
  <span><svg viewBox="-14.500 -14.500 29 29"><path d="M-10-10.500H9.500L7 9.500Q6.500 11.500 4.500 11.500h-9Q-6.800 11.500-7.200 9.500z" fill="url(#g-trash)"/><ellipse cx="-.2" cy="-10.200" rx="9.700" ry="1.600" fill="#343b43" stroke="#7b848a" stroke-width=".8"/></svg></span>
</footer>
</body>
</html>
```
FILE: styles.css
```css
* { box-sizing: border-box; }
html, body { margin: 0; height: 1080px; overflow: hidden; }
body {
  display: flex;
  flex-direction: column;
  width: 2560px;
  font-family: Inter, "Liberation Sans", sans-serif;
  font-size: 13px;
  color: #fff;
  background:
    linear-gradient(to bottom, rgba(0, 0, 0, .4), transparent 35px) 0 1035px / 100% 45px no-repeat,
    linear-gradient(to right, #170b32 0, #180d38 800px, #160a3c 1290px, #4c1268 1400px, #65147a 1750px, #4d1471 2050px, #2a1161 2250px, #1f0f50 2560px) 0 1000px / 100% 80px no-repeat,
    linear-gradient(to right, #3b1468 0, #3c1778 500px, #33198c 950px, #2f178e 1500px, #2a1175 1950px, #2b127a 2560px);
}
.defs { position: absolute; }
svg { display: block; flex: none; overflow: visible; }

.menubar { display: flex; align-items: center; height: 24px; flex: none; padding: 0 20px; }
.apple { width: 14px; height: 17px; margin: -1px 20px 0 0; }
.menus {
  display: grid;
  grid-template-columns: 118px 42px 44px 50px 64px 75px 53px 66px 42px 69px 40px;
  white-space: nowrap;
  font-weight: 500;
  letter-spacing: -.18px;
  line-height: 23px;
  text-shadow: 0 1px 2px rgba(0, 0, 0, .35);
}
.menus .app { font-weight: 700; letter-spacing: .08px; }
.status { display: flex; align-items: center; height: 24px; margin-left: auto; color: #eee6f8; }
.status svg { width: 24px; height: 24px; margin-right: 10.500px; }
.status svg:nth-of-type(1) { margin-right: 11.500px; }
.status svg:nth-of-type(7) { margin-right: 14px; margin-left: 4px; }
.status svg:nth-of-type(6) { margin-left: 4px; }
.pct { width: 35px; font-size: 11px; font-weight: 500; }
.status .battery { width: 26px; height: 14px; margin-right: 15px; }
.clock { display: flex; justify-content: space-between; width: 116px; font-weight: 500; white-space: nowrap; margin-left: 1.500px; line-height: 23px; }

.window {
  display: flex;
  flex-direction: column;
  width: 2560px;
  height: 1012px;
  flex: none;
  border: 1px solid #626262;
  border-radius: 11px;
  box-shadow: 0 0 0 1px #000, 0 4px 20px rgba(0, 0, 0, .5);
  background: #333;
  overflow: hidden;
}
.tabstrip { display: flex; align-items: center; height: 40px; flex: none; background: #1d1d1d; padding-left: 20px; }
.lights { display: flex; gap: 8px; width: 85px; margin-top: -1px; }
.lights i { width: 12px; height: 12px; border-radius: 50%; }
.red { background: #ff5550; }
.amber { background: #ffaf3a; }
.green { background: #00bf40; }
.strip-tools { display: flex; gap: 20px; width: 73px; margin-top: 8px; }
.strip-tools svg { width: 20px; height: 20px; }
.tabs { display: flex; height: 32px; align-self: flex-end; }
.tab { display: flex; align-items: center; width: 239px; height: 32px; position: relative; color: #e4e4e4; padding-left: 10px; }
.tab::before { content: ""; width: 1px; height: 20px; background: #606060; position: absolute; left: 0; top: 6px; }
.tab.active { background: #333; border-radius: 6px 6px 0 0; color: #fff; width: 240px; }
.tab.active::before { display: none; }
.tab.dim { color: #bcbcbc; }
.fav { width: 18px; height: 18px; }
.mail { width: 14px; height: 11px; margin: 0 2px; }
.title {
  width: 177px;
  margin-left: 9px;
  white-space: nowrap;
  font-size: 12px;
  font-weight: 500;
  letter-spacing: -.08px;
  line-height: 18px;
  -webkit-mask: linear-gradient(to right, #000 152px, transparent 176px);
  mask: linear-gradient(to right, #000 152px, transparent 176px);
}
.x { width: 10px; height: 10px; margin-left: 5.500px; color: #ddd; }
.plus { width: 14px; height: 14px; margin: 7px 0 0 10px; }
.chev { width: 8px; height: 6px; margin: 9px 0 0 15px; }

.toolbar { display: flex; align-items: center; height: 38px; flex: none; }
.nav { width: 20px; height: 20px; margin-left: 17px; }
.reload { margin-left: 24px; }
.address { display: flex; align-items: center; width: 1919px; height: 30px; margin-left: 18px; padding: 0 14px 0 17px; border-radius: 15px; background: #252525; }
.info { width: 18px; height: 18px; }
.url { margin-left: 14px; font-size: 14px; letter-spacing: -.07px; font-weight: 500; flex: 1; line-height: 20px; margin-top: -1px; }
.scheme { color: #8d8d8d; font-weight: 400; }
.read, .star { width: 20px; height: 20px; }
.star { margin-left: 20px; }
.extensions { display: flex; gap: 19.800px; margin-left: 17px; }
.extensions svg { width: 24px; height: 24px; }
.bar-sep { width: 1px; height: 16px; margin-left: 12px; background: #555; }
.actions { display: flex; gap: 20.400px; margin-left: 11.500px; }
.actions svg { width: 24px; height: 24px; fill: none; stroke: #f0f0f0; stroke-width: 1.200; }
.actions svg:nth-child(6) { margin-left: 1px; }
.actions svg:nth-child(7) { margin-left: 1px; }
.actions svg:nth-child(8) { margin-left: -2px; }

.page { flex: 1; margin: 0 2px 3px; border-radius: 6px 6px 9px 9px; background: #272727; }
.error { display: flex; flex-direction: column; align-items: flex-start; margin: 129px 0 0 977px; }
.cloud { width: 72px; height: 73px; }
h1 { margin: 47px 0 0; font-size: 24px; line-height: 32px; font-weight: 700; letter-spacing: -.84px; white-space: nowrap; }
.hint { margin: 24px 0 0; font-size: 14px; line-height: 20px; letter-spacing: -.15px; }
.code { margin: 23px 0 0; font-size: 10px; line-height: 16px; color: #8b8b8b; font-weight: 500; letter-spacing: .26px; }
button { width: 100px; height: 32px; margin: 42px 0 0; padding: 0; border: 0; border-radius: 2px; background: #0072cc; color: #fff; font: 600 12px/33px Inter, sans-serif; }

.dock {
  display: flex;
  align-items: flex-start;
  width: 1512px;
  height: 38px;
  flex: none;
  margin: 1px 0 0 524px;
  padding: 2px 2px 0;
  border: 1px solid rgba(255, 255, 255, .22);
  border-radius: 9px;
  background: rgba(75, 55, 95, .28);
}
.dock span { display: flex; flex-direction: column; align-items: center; width: 29px; }
.dock svg { width: 29px; height: 29px; }
.dock .on::after { content: ""; width: 3px; height: 3px; margin-top: 1px; border-radius: 50%; background: #b193c4; }
.dock-sep { width: 1px; height: 28px; margin: 1px 6.500px; background: #796088; }
```
